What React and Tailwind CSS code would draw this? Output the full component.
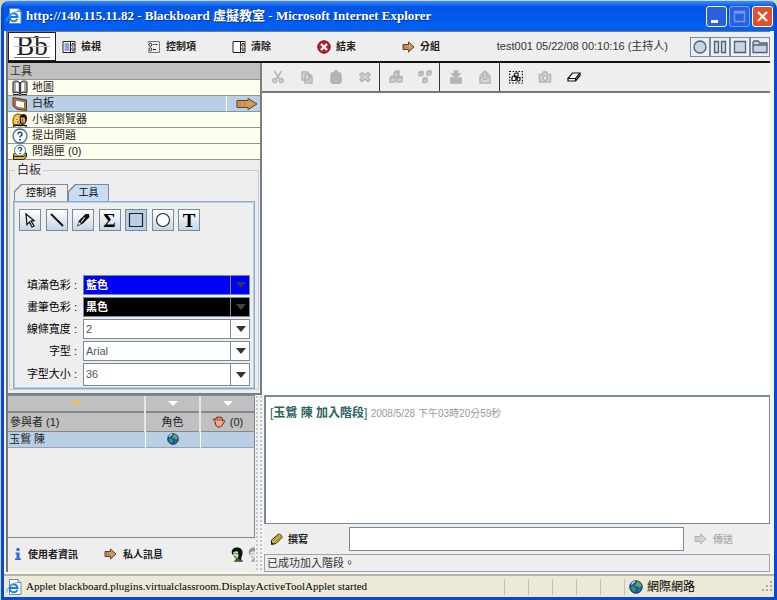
import { useState } from "react"
import clsx from "clsx"

const GlobeIcon = ({ className }) => (
  <svg viewBox="0 0 14 14" className={className} aria-hidden="true">
    <circle cx="7" cy="7" r="6.3" fill="#1c4fc4" stroke="#0b2250" strokeWidth=".8" />
    <path d="M7.500 1.500c3 0 5 2.500 5 5l-2 1.500-1.500-2-2 .5-1-2 1.500-1z" fill="#4fb53f" />
    <path d="M2 7l2.500-1L7 8.500 6 12c-2.500-.5-4-2.500-4-5zM9 9.500l2.500-.5-1.500 2.500z" fill="#3c9c35" />
    <path d="M2.500 4.500C3.300 3 4.300 2 6 1.600" stroke="#d8f0ff" strokeWidth="1.300" fill="none" />
  </svg>
)

const BrowserIcon = ({ className }) => (
  <svg viewBox="0 0 16 16" className={className} aria-hidden="true">
    <path d="M3.500 .5h8.500l3 3v12H3.500z" fill="#fff" stroke="#6f87b5" />
    <path d="M12 .5v3h3" fill="#dfe6ee" stroke="#6f87b5" />
    <path d="M11.300 10.800A4 4 0 1 1 11.600 9H4.500" fill="none" stroke="#1e7fd6" strokeWidth="2" />
    <path d="M.8 13.500C0 9.500 6 3.500 12 3.800" stroke="#58aef0" fill="none" />
  </svg>
)

const ArrowIcon = ({ className, fill = "#c99a5b", stroke = "#5c4322" }) => (
  <svg viewBox="0 0 13 12" className={className} aria-hidden="true">
    <path d="M1 3.500h5.500V1l5.500 5-5.500 5V8.500H1z" fill={fill} stroke={stroke} />
    <path d="M2.500 4v4M4.500 4v4" stroke={stroke} strokeWidth=".5" opacity=".6" />
  </svg>
)

const ViewIcon = () => (
  <svg viewBox="0 0 14 14" className="h-3.5 w-3.5">
    <path d="M1 1.500h12v11H1z" fill="#fff" stroke="#222" />
    <path d="M8.500 1.500v11M8.500 5h4.500M8.500 9h4.500" stroke="#222" />
    <path d="M2.500 4h5M2.500 6h5M2.500 8h5M2.500 10h5" stroke="#2546b8" />
    <path d="M10 3.500h2M10.800 6.200v1.600M10 10.800h2" stroke="#222" />
  </svg>
)

const ControlsIcon = () => (
  <svg viewBox="0 0 14 14" className="h-3.5 w-3.5">
    <path d="M1.500 3v-1.500h11M12.500 2v10.500h-11V11" fill="none" stroke="#777" />
    <circle cx="3.300" cy="4.700" r="1.500" fill="none" stroke="#222" />
    <circle cx="3.300" cy="9.300" r="1.500" fill="none" stroke="#222" />
    <path d="M6 4.500h1.500M8.500 4.500h2M6 9.500h3" stroke="#222" />
  </svg>
)

const ClearIcon = () => (
  <svg viewBox="0 0 14 14" className="h-3.5 w-3.5">
    <path d="M1 1.500h12v11H1z" fill="#fff" stroke="#222" />
    <path d="M8.500 1.500v11M8.500 5h4.500M8.500 9h4.500" stroke="#222" />
    <path d="M10 3.500h2M10.800 6.200v1.600M10 10.800h2" stroke="#222" />
  </svg>
)

const EndIcon = () => (
  <svg viewBox="0 0 14 14" className="h-3.5 w-3.5">
    <circle cx="7" cy="7" r="6.200" fill="#c0202c" stroke="#5c1016" />
    <path d="M4 4l6 6M10 4l-6 6" stroke="#fff" strokeWidth="2.200" />
  </svg>
)

const BookIcon = () => (
  <svg viewBox="0 0 16 16" className="h-4 w-4">
    <path d="M1 13V2c2-1.500 5-1.500 7 1 2-2.500 5-2.500 7-1v11c-2-1-5-1-7 1-2-2-5-2-7-1z" fill="#a9a9a9" stroke="#222" />
    <path d="M4 3c1-.3 1.500-.2 2.500.3v8.200c-.8-.5-1.500-.7-2.500-.6zM12 3c-1-.3-1.500-.2-2.500.3v8.200c.8-.5 1.500-.7 2.500-.6z" fill="#fff" />
    <path d="M8 3v11" stroke="#222" strokeWidth="1.500" />
    <path d="M1 14.500h5.500l1.500 1 1.500-1H15" stroke="#111" fill="none" />
  </svg>
)

const BoardIcon = () => (
  <svg viewBox="0 0 16 16" className="h-4 w-4">
    <path d="M1 1.500l13.500 2.500v10.500l-9-1L1 10z" fill="#b8763f" stroke="#5b3518" />
    <path d="M3.500 4l9 2v6.500l-6.500-1-2.500-2z" fill="#fff" stroke="#7d4b22" strokeWidth=".7" />
  </svg>
)

const PeopleIcon = () => (
  <svg viewBox="0 0 16 16" className="h-4 w-4">
    <path d="M1.500 13c-1.500-5 0-11 4.500-11s4 3 4 6l-3 5z" fill="#f1c92b" stroke="#5c4505" />
    <path d="M3.500 6h4v5H4z" fill="#f6d9ae" />
    <path d="M8 4c1-3 7-3 7 2 0 4-2 7-5 7-2 0-3-4-2-9z" fill="#20140a" />
    <path d="M8.500 5.500h4l1 2.500-1 3.500H9.500z" fill="#e0a268" />
    <path d="M1 14.500c2-2 5-1 7-1s5-1 7 1" stroke="#111" strokeWidth="1.500" fill="none" />
    <path d="M4.500 7.500h1M10 8h1M5 10h2M9.800 10.300h1.700" stroke="#7a1b12" />
  </svg>
)

const QuestionIcon = () => (
  <svg viewBox="0 0 16 16" className="h-4 w-4">
    <circle cx="8" cy="8" r="7" fill="#fff" stroke="#3f6f9d" strokeWidth="1.300" />
    <path d="M6 6.300c0-3 4.200-2.600 4 0-.2 1.400-2 1.500-2 3.200" fill="none" stroke="#1c466f" strokeWidth="1.500" />
    <circle cx="8" cy="11.700" r="1" fill="#1c466f" />
  </svg>
)

const InboxIcon = () => (
  <svg viewBox="0 0 16 16" className="h-4 w-4">
    <path d="M1.500 10l3-1h10v4l-3 2.500h-10z" fill="#e0b23c" stroke="#33260a" />
    <circle cx="8" cy="6.500" r="5.500" fill="#fff" stroke="#3f6f9d" />
    <path d="M6.300 5.200c0-2.400 3.500-2.200 3.400 0-.2 1.200-1.700 1.200-1.700 2.500" fill="none" stroke="#1c466f" strokeWidth="1.300" />
    <circle cx="8" cy="9.600" r=".8" fill="#1c466f" />
    <path d="M1.500 12.500h10l3-2" stroke="#33260a" fill="none" />
  </svg>
)

const PencilIcon = () => (
  <svg viewBox="0 0 14 14" className="h-3.5 w-3.5">
    <path d="M1.500 8L8 2.500c1.500-1 4 .5 4 3L6 11.500l-4.500 1z" fill="#e0b94a" stroke="#2e240c" />
    <path d="M3 9l6-5.500M4.500 10.500l6.500-6" stroke="#8a6615" strokeWidth=".8" />
    <path d="M1.500 12.500V10L4 12z" fill="#111" />
  </svg>
)

const HandIcon = () => (
  <svg viewBox="0 0 14 14" className="h-3.5 w-3.5">
    <path
      d="M3 6.500L1.500 5c-.5-1 .5-1.500 1.200-1L4 5V3c.2-1 1.400-1 1.500 0 .1-1.500 1.500-1.500 1.700-.3.300-1 1.500-.9 1.600.2.300-.8 1.500-.6 1.600.5V6l1.300-.7c1 0 1.300.8.800 1.400L10 10.500c-1.500 2-5 2-6 0z"
      fill="#f0a98c"
      stroke="#6b1f12"
    />
    <path d="M5.600 3.500V6M7.200 3.500V6M8.800 3.500V6" stroke="#6b1f12" strokeWidth=".6" />
  </svg>
)

const PersonIcon = ({ faded }) => (
  <svg viewBox="0 0 13 15" className={clsx("h-[15px] w-[13px]", faded && "opacity-40 grayscale")}>
    <path d="M1 7C0 3 2 .5 6 .5S12 3 11.500 7L10 12l2 2.500H3L5 12z" fill="#111" />
    <path d="M2.500 5c1.500-.5 4-1.500 4.500 0l.5 4L6.500 11.500H4L3.500 9H2z" fill="#c4dfb4" />
    <path d="M3 14.500l3-2.500h2.500l3.500 2.500z" fill="#2f6a45" />
    <path d="M3.500 6.500h1M5.500 6.500h1M4 10h1.500" stroke="#111" strokeWidth=".8" />
  </svg>
)

const InfoIcon = () => (
  <svg viewBox="0 0 8 14" className="h-3.5 w-2">
    <circle cx="4" cy="2.500" r="1.700" fill="#3868c8" />
    <path d="M1.500 5.500h4v6h1.500V13H1v-1.500h1.500V7h-1z" fill="#3868c8" />
  </svg>
)

const menuItems = [
  { label: "檢視", icon: <ViewIcon /> },
  { label: "控制項", icon: <ControlsIcon /> },
  { label: "清除", icon: <ClearIcon /> },
  { label: "結束", icon: <EndIcon /> },
  { label: "分組", icon: <ArrowIcon className="h-3 w-[13px]" /> },
]

const recorderButtons = [
  { name: "Record", shape: <circle cx="8" cy="8" r="6" /> },
  { name: "Pause", shape: <path d="M2.500 2.500h4v11h-4zM9.500 2.500h4v11h-4z" /> },
  { name: "Stop", shape: <path d="M2.500 2.500h11v11h-11z" /> },
  { name: "Archive", shape: <path d="M1 13.500v-10l1-1.500h4.500l1 2h7.500v9.500zM1 6h14" /> },
]

const tools = [
  { label: "地圖", icon: <BookIcon /> },
  { label: "白板", icon: <BoardIcon /> },
  { label: "小組瀏覽器", icon: <PeopleIcon /> },
  { label: "提出問題", icon: <QuestionIcon /> },
  { label: "問題匣 (0)", icon: <InboxIcon /> },
]

const drawTools = [
  {
    name: "Select",
    icon: <path d="M5 3l8 6.500-3 .5 3 5-2 1-2.500-5L6 13.500z" fill="#fff" stroke="#111" strokeWidth="1.300" />,
  },
  { name: "Line", icon: <path d="M3 3l12 12" stroke="#111" strokeWidth="2" /> },
  {
    name: "Pen",
    icon: (
      <>
        <path d="M3 15.500l2-6L11.500 3H15l.5 3-6.500 6.500z" fill="#111" />
        <path d="M7 11.500l3.500-5" stroke="#ddd" strokeWidth="1.200" />
        <path d="M4 14l1-3 2 2z" fill="#fff" />
      </>
    ),
  },
  { name: "Equation", glyph: "Σ" },
  { name: "Rectangle", icon: <path d="M2.500 2.500h13v13h-13z" fill="none" stroke="#223" strokeWidth="1.200" /> },
  { name: "Ellipse", icon: <circle cx="9" cy="9" r="6.500" fill="#fff" stroke="#222" strokeWidth="1.100" /> },
  { name: "Text", glyph: "T" },
]

const options = [
  { id: "fill", label: "填滿色彩", value: "藍色", tone: "bg-[#0000f4] font-bold text-white", arrow: "border-[#6f8fd0] text-[#333355]" },
  { id: "pen", label: "畫筆色彩", value: "黑色", tone: "bg-black font-bold text-white", arrow: "border-[#7a8a99] text-[#444444]" },
  { id: "width", label: "線條寬度", value: "2", tone: "bg-white text-[#555555]", arrow: "border-[#7a8a99] text-[#333333]" },
  { id: "font", label: "字型", value: "Arial", tone: "bg-white text-[#555555]", arrow: "border-[#7a8a99] text-[#333333]" },
  { id: "size", label: "字型大小", value: "36", tone: "bg-white text-[#555555]", arrow: "border-[#7a8a99] text-[#333333]" },
]

const canvasGroups = [
  [
    { name: "Cut", d: "M3.500 1l4.500 7.500M10.500 1L6 8.500M3.800 8.500a2 2 0 1 0 .1 0zM10.200 8.500a2 2 0 1 0 .1 0z" },
    { name: "Copy", d: "M2 2h5l2 2v6H2zM5 4.500h5l2 2V13H5zM10 4.500v2.500h2.500" },
    { name: "Paste", solid: true, d: "M3 3h2l1-2h2l1 2h2l1 2v7l-1.500 1.500h-7L2 12V5z" },
    { name: "Delete", d: "M2 4.500L4 2.500 7 5l3-2.500 2 2L9.500 7l2.500 2.500-2 2L7 9l-3 2.500-2-2L4.500 7z" },
  ],
  [
    { name: "Group", d: "M1 8l2-2h3v5l-1 1H1zM8 8l2-1.500h3V11l-1 1H8zM5 3l2-2h3v4L9 7H5zM5 3h4v3M1 8h4M8 8h4" },
    { name: "Ungroup", d: "M1 3l1-1.500h3v3L4 5.500H1zM9 2.500L10 1h3v3l-1 1H9zM5 9.500L6 8h3v3.500l-1 1H5zM1 3h3M9 2.500h3M5 9.500h3" },
  ],
  [
    { name: "Bring forward", solid: true, d: "M5.500 1h3v3H11L7 7.500 3 4h2.500zM2 8h3l2 1.500L9 8h3v5H2z" },
    { name: "Send back", d: "M7 1l4 4H8.500v4h-3V5H3zM4.500 7H2v6h10V7H9.500" },
  ],
  [
    { name: "Select all", dark: true, dashed: true, d: "M5.500 4l1.500-1h2v3L8 7H5.500zM3 7.500L4 6h3v3.500L6 10.500H3zM8 9l1-1.500h2V10l-1 1H8z" },
    { name: "Snapshot", d: "M1.500 4.500h3L5.500 2h3l1 2.500h3V12h-11zM7 6a2.200 2.200 0 1 0 .1 0zM5 2v2M9 2v2" },
    { name: "Eraser", dark: true, d: "M1 8.500l4.500-5.500h7.500L8.500 8.500zM1 8.500V11h7.500V8.500M8.500 11L13 5.500V3" },
  ],
]

const MenuBar = () => (
  <div className="flex h-[31px] items-center border-b-2 border-[#111111] bg-[#eeeeee]">
    <div className="flex h-full w-12 shrink-0 items-center justify-center border border-[#222222] bg-white">
      <span className="relative px-0.5 font-['Liberation_Serif',serif] text-[27px] leading-none text-[#222222]">
        Bb
        <span className="absolute inset-x-0 top-[4px] h-px bg-[#777777]" />
        <span className="absolute inset-x-0 top-[13px] h-px bg-[#bbbbbb]" />
        <span className="absolute inset-x-0 bottom-0.5 h-px bg-[#777777]" />
      </span>
    </div>
    <nav className="ml-1.5 flex">
      {menuItems.map((item) => (
        <button key={item.label} className="flex w-[85px] items-center gap-[5px] text-[10px] font-bold text-[#222222]">
          {item.icon}
          {item.label}
        </button>
      ))}
    </nav>
    <span className="ml-auto text-[11px] whitespace-nowrap text-[#333333]">test001 05/22/08 00:10:16 (主持人)</span>
    <div className="ml-[22px] flex shrink-0">
      {recorderButtons.map((b) => (
        <button
          key={b.name}
          aria-label={b.name}
          className="flex h-5 w-5 items-center justify-center border border-[#7a8a99] bg-[#e9eff5]"
        >
          <svg viewBox="0 0 16 16" className="h-4 w-4" fill="#c3d5e6" stroke="#555f6a" strokeWidth="1.300">
            {b.shape}
          </svg>
        </button>
      ))}
    </div>
  </div>
)

const ToolList = ({ active, onSelect }) => (
  <div className="bg-[#8c949c]">
    <h2 className="mb-px h-4 bg-[#c0c0c0] pl-0.5 text-[11px] leading-4 text-[#333333]">工具</h2>
    <ul className="flex flex-col gap-px border-b border-[#8c949c]">
      {tools.map((tool) => (
        <li key={tool.label}>
          <button
            onClick={() => onSelect(tool.label)}
            className={clsx(
              "flex h-[15px] w-full items-center pl-1 text-[11px] leading-[15px] text-[#222222]",
              active === tool.label ? "bg-[#b8cfe5]" : "bg-[#ffffee]",
            )}
          >
            {tool.icon}
            <span className="ml-1">{tool.label}</span>
            {active === tool.label && (
              <span className="ml-auto flex h-full w-[34px] items-center justify-end border-l border-white pr-0.5">
                <svg viewBox="0 0 22 12" className="h-3 w-[22px]">
                  <path d="M1 2.500h11V.5L21 6l-9 5.500v-2H1z" fill="#d39a55" stroke="#5c4322" />
                  <path d="M4 3v6M8 3v6" stroke="#a8753a" strokeWidth=".8" />
                </svg>
              </span>
            )}
          </button>
        </li>
      ))}
    </ul>
  </div>
)

const Tab = ({ label, selected, className }) => (
  <button
    role="tab"
    aria-selected={selected}
    className={clsx(
      "h-[17px] bg-[#7a8a99] pt-px pl-px text-[10px] text-black [clip-path:polygon(7px_0,100%_0,100%_100%,0_100%,0_7px)]",
      className,
    )}
  >
    <span
      className={clsx(
        "mr-px block h-4 leading-4 [clip-path:polygon(7px_0,100%_0,100%_100%,0_100%,0_7px)]",
        selected ? "bg-[#c8ddf2]" : "bg-[#eeeeee]",
      )}
    >
      {label}
    </span>
  </button>
)

const OptionRow = ({ option, tall }) => (
  <div className="flex items-center">
    <label htmlFor={option.id} className="w-[62px] text-right text-[11px] whitespace-nowrap text-black">
      {option.label} :
    </label>
    <div className={clsx("relative ml-1.5 flex-1", tall ? "h-[23px]" : "h-5")}>
      <select
        id={option.id}
        className={clsx(
          "block h-full w-full appearance-none border border-[#7a8a99] pl-0.5 text-[11px] outline-none",
          option.tone,
        )}
      >
        <option>{option.value}</option>
      </select>
      <span
        className={clsx(
          "pointer-events-none absolute inset-y-0 right-0 flex w-5 items-center justify-center border-l",
          option.arrow,
        )}
      >
        <svg viewBox="0 0 10 6" className="h-1.5 w-2.5">
          <path d="M0 0h10L5 6z" fill="currentColor" />
        </svg>
      </span>
    </div>
  </div>
)

const WhiteboardPanel = () => {
  const [drawTool, setDrawTool] = useState("Rectangle")

  return (
    <fieldset className="mx-px mt-0.5 mb-[3px] border border-[#b8cfe5] px-[3px]">
      <legend className="ml-0.5 px-0.5 text-[12px] leading-4 text-[#333333]">白板</legend>
      <div role="tablist" className="mt-1.5 flex pl-px">
        <Tab label="控制項" selected={false} className="w-[54px]" />
        <Tab label="工具" selected className="w-[41px]" />
      </div>
      <div className="border-2 border-[#b8cfe5] outline outline-1 -outline-offset-1 outline-[#8fa9c4]">
        <div className="flex w-[185px] justify-between pt-1.5 pl-1">
          {drawTools.map((tool) => (
            <button
              key={tool.name}
              aria-label={tool.name}
              onClick={() => setDrawTool(tool.name)}
              className={clsx(
                "flex h-[22px] w-[22px] items-center justify-center border border-[#7a8a99] font-['Liberation_Serif',serif] text-[19px] leading-none font-bold text-black",
                drawTool === tool.name ? "bg-[#b8cfe5]" : "bg-linear-to-b from-white to-[#c4d7e8]",
              )}
            >
              {tool.glyph || (
                <svg viewBox="0 0 18 18" className="h-[18px] w-[18px]" fill="none">
                  {tool.icon}
                </svg>
              )}
            </button>
          ))}
        </div>
        <div className="mt-11 flex flex-col gap-0.5 pr-[3px] pb-px">
          {options.map((option) => (
            <OptionRow key={option.id} option={option} tall={option.id === "size"} />
          ))}
        </div>
      </div>
    </fieldset>
  )
}

const CanvasToolbar = () => (
  <div className="flex h-[30px] border-b-2 border-[#777777] bg-[#eeeeee]">
    {canvasGroups.map((group, i) => (
      <div
        key={group[0].name}
        className={clsx("flex pl-px", i < canvasGroups.length - 1 && "border-r border-[#333333]")}
      >
        {group.map((item) => (
          <button
            key={item.name}
            aria-label={item.name}
            className={clsx(
              "flex w-[29px] items-center justify-center",
              item.dark ? "text-[#111111]" : "text-[#b4b4b4]",
            )}
          >
            <svg
              viewBox="0 0 14 14"
              className="h-3.5 w-3.5"
              fill={item.solid ? "currentColor" : item.dark ? "#fff" : "#d6d6d6"}
              stroke="currentColor"
              strokeWidth={item.dark ? 1.2 : 1.5}
            >
              {item.dashed && <path d="M.6 1.500h12.800v11.500H.6z" fill="none" strokeDasharray="1.500 1.500" />}
              <path d={item.d} />
            </svg>
          </button>
        ))}
      </div>
    ))}
  </div>
)

const sortColumns = [
  { name: "Sort by participant", color: "text-[#f5c04a]" },
  { name: "Sort by role", color: "text-white" },
  { name: "Sort by raised hand", color: "text-white" },
]

const Participants = () => (
  <section className="flex w-[247px] shrink-0 flex-col border-t border-[#7a8a99] bg-[#eeeeee]">
    <table className="w-full table-fixed border-collapse border-r border-[#7a8a99] text-[11px] text-[#222222]">
      <colgroup>
        <col className="w-[137px]" />
        <col className="w-[55px]" />
        <col />
      </colgroup>
      <thead className="bg-[#c0c0c0]">
        <tr className="h-4 border-b-2 border-[#7f8790]">
          {sortColumns.map((column) => (
            <td key={column.name} className="border-r-2 border-[#e6e6e6] p-0 last:border-r-0">
              <button aria-label={column.name} className={clsx("flex w-full justify-center", column.color)}>
                <svg viewBox="0 0 10 5" className="h-[5px] w-2.5">
                  <path d="M0 0h10L5 5z" fill="currentColor" />
                </svg>
              </button>
            </td>
          ))}
        </tr>
        <tr className="h-[19px] border-b border-[#7f8790]">
          <th className="border-r-2 border-[#e6e6e6] p-0 pl-0.5 text-left font-normal">參與者 (1)</th>
          <th className="border-r-2 border-[#e6e6e6] p-0 font-normal">角色</th>
          <th className="p-0 font-normal">
            <span className="flex items-center justify-center gap-1">
              <HandIcon /> (0)
            </span>
          </th>
        </tr>
      </thead>
      <tbody>
        <tr className="h-4 border-b border-[#9aa4ae] bg-[#b8cfe5] leading-[15px]">
          <td className="border-r border-white p-0 pl-px">玉鴛 陳</td>
          <td className="border-r border-white p-0">
            <GlobeIcon className="mx-auto h-3 w-3" />
          </td>
          <td className="p-0" />
        </tr>
      </tbody>
    </table>
    <div className="flex-1 border-r border-b border-[#7a8a99]" />
    <div className="flex h-[34px] items-center overflow-hidden pb-0.5 pl-1.5 text-[10px] font-bold text-[#222222]">
      <button className="flex items-center gap-1.5">
        <InfoIcon />
        使用者資訊
      </button>
      <button className="ml-[26px] flex items-center gap-1.5">
        <ArrowIcon className="h-3 w-[13px]" />
        私人訊息
      </button>
      <div className="ml-auto flex w-6 shrink-0 gap-1 overflow-hidden">
        <div className="shrink-0">
          <PersonIcon />
        </div>
        <div className="shrink-0">
          <PersonIcon faded />
        </div>
      </div>
    </div>
  </section>
)

const Chat = () => {
  const [message, setMessage] = useState("")

  return (
    <section className="flex min-w-0 flex-1 flex-col bg-[#eeeeee]">
      <div className="flex-1 border border-t-2 border-l-2 border-[#7a8a99] bg-white px-1 pt-2">
        <p className="text-[12px] leading-4 text-[#2b6360]">
          [<b>玉鴛 陳 加入階段</b>] <span className="text-[10px] text-[#999999]">2008/5/28 下午03時20分59秒</span>
        </p>
      </div>
      <div className="flex h-[30px] items-center">
        <label htmlFor="compose" className="flex w-[85px] items-center gap-1 pl-1.5 text-[10px] font-bold text-[#222222]">
          <PencilIcon />
          撰寫
        </label>
        <input
          id="compose"
          value={message}
          onChange={(e) => setMessage(e.target.value)}
          className="h-6 min-w-0 flex-1 border border-[#7a8a99] bg-white px-1 text-[11px] outline-none"
        />
        <button className="flex w-[86px] items-center gap-1.5 pl-2.5 text-[10px] font-bold text-[#b0b0b0]">
          <ArrowIcon className="h-3 w-[13px]" fill="#d2d2d2" stroke="#b0b0b0" />
          傳送
        </button>
      </div>
      <p className="h-[18px] border border-[#9aa4ae] pl-0.5 text-[11px] leading-4 text-[#333333]">已成功加入階段。</p>
    </section>
  )
}

const TitleBar = () => (
  <header className="flex h-[30px] items-center bg-linear-to-b from-[#3b8cff] via-[#0054e3] via-20% to-[#0062f8] pr-px pl-0.5">
    <BrowserIcon className="h-4 w-4" />
    <h1 className="ml-1 font-['Liberation_Serif','Noto_Sans_CJK_TC',serif] text-[13px] font-bold whitespace-nowrap text-white [text-shadow:1px_1px_#0a2f88]">
      http://140.115.11.82 - Blackboard 虛擬教室 - Microsoft Internet Explorer
    </h1>
    <div className="ml-auto flex gap-0.5">
      <button aria-label="Minimize" className="h-[21px] w-[21px] rounded-[3px] border border-white bg-[#2a5fe0]">
        <svg viewBox="0 0 19 19">
          <path d="M4 13h7v3H4z" fill="#fff" />
        </svg>
      </button>
      <button aria-label="Maximize" className="h-[21px] w-[21px] rounded-[3px] border border-[#7ba2ee] bg-[#2a5fe0]">
        <svg viewBox="0 0 19 19">
          <path d="M4.500 4.500h10v10h-10zM4.500 6h10" fill="none" stroke="#6f98ee" strokeWidth="1.500" />
        </svg>
      </button>
      <button aria-label="Close" className="h-[21px] w-[21px] rounded-[3px] border border-white bg-[#e0502a]">
        <svg viewBox="0 0 19 19">
          <path d="M5 5l9 9M14 5l-9 9" stroke="#fff" strokeWidth="2.200" />
        </svg>
      </button>
    </div>
  </header>
)

const StatusBar = () => (
  <footer className="flex h-[23px] items-center border-t-2 border-[#b8b4a4] bg-[#ece9d8] pl-0.5 text-black">
    <BrowserIcon className="h-4 w-4" />
    <span className="ml-1 font-['Liberation_Serif',serif] text-[11px] whitespace-nowrap">
      Applet blackboard.plugins.virtualclassroom.DisplayActiveToolApplet started
    </span>
    <div className="ml-auto flex h-4">
      {[1, 2, 3, 4, 5].map((n) => (
        <span key={n} className="w-6 border-l border-[#c5c2b2]" />
      ))}
    </div>
    <div className="flex h-4 w-[150px] items-center gap-1 border-l border-[#c5c2b2] pl-1 text-[12px]">
      <GlobeIcon className="h-3.5 w-3.5" />
      網際網路
      <svg viewBox="0 0 12 12" className="ml-auto h-3 w-3" fill="#b0ac9a">
        <path d="M8 0h2v2H8zM8 4h2v2H8zM4 4h2v2H4zM8 8h2v2H8zM4 8h2v2H4zM0 8h2v2H0z" />
      </svg>
    </div>
  </footer>
)

export default function App() {
  const [activeTool, setActiveTool] = useState("白板")

  return (
    <div className="flex min-h-screen flex-col bg-[#c9d8c4] pt-px pl-px font-['Liberation_Sans','Noto_Sans_CJK_TC',sans-serif]">
      <div className="flex flex-1 flex-col overflow-hidden rounded-t-lg border-x-3 border-b-3 border-[#0a48d8] bg-[#f4f4f4]">
        <TitleBar />
        <main className="mr-1 mb-0.5 ml-0.5 flex flex-1 flex-col border-t border-l-2 border-[#777777]">
          <MenuBar />
          <div className="flex">
            <aside className="flex w-[254px] shrink-0 flex-col border-r-2 border-b-2 border-[#7a7f86] bg-[#eeeeee]">
              <ToolList active={activeTool} onSelect={setActiveTool} />
              <WhiteboardPanel />
            </aside>
            <section className="flex flex-1 flex-col">
              <CanvasToolbar />
              <div className="flex-1 bg-white" />
            </section>
          </div>
          <div className="flex flex-1">
            <Participants />
            <div className="w-[9px] bg-[#f2f2f2] bg-[radial-gradient(#c4c4c4_1px,transparent_1px)] bg-size-[4px_4px]" />
            <Chat />
          </div>
        </main>
        <StatusBar />
      </div>
    </div>
  )
}
